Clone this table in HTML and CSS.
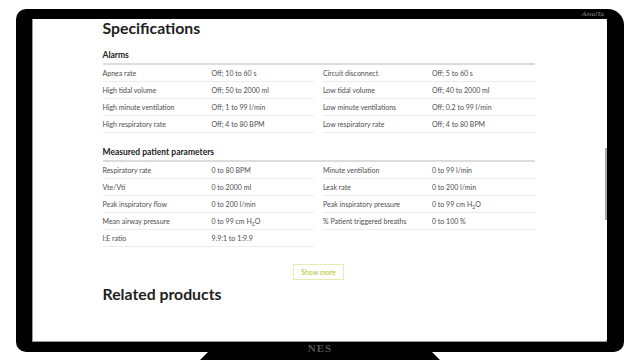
FILE: index.html
```
<!DOCTYPE html>
<html lang="en">
<head>
<meta charset="utf-8">
<title>Specifications</title>
<link rel="stylesheet" href="styles.css">
</head>
<body>
<div class="monitor">
  <div class="bezel-top"><span class="brand">AmalTa</span></div>
  <div class="screen">
    <main class="page">
      <div class="content">
        <h2 class="title">Specifications</h2>

        <section class="spec">
          <h3 class="spec-head">Alarms</h3>
          <div class="spec-grid">
            <div class="spec-col">
              <div class="row"><span>Apnea rate</span><span>Off; 10 to 60 s</span></div>
              <div class="row"><span>High tidal volume</span><span>Off; 50 to 2000 ml</span></div>
              <div class="row"><span>High minute ventilation</span><span>Off; 1 to 99 l/min</span></div>
              <div class="row"><span>High respiratory rate</span><span>Off; 4 to 80 BPM</span></div>
            </div>
            <div class="spec-col">
              <div class="row"><span>Circuit disconnect</span><span>Off; 5 to 60 s</span></div>
              <div class="row"><span>Low tidal volume</span><span>Off; 40 to 2000 ml</span></div>
              <div class="row"><span>Low minute ventilations</span><span>Off; 0.2 to 99 l/min</span></div>
              <div class="row"><span>Low respiratory rate</span><span>Off; 4 to 80 BPM</span></div>
            </div>
          </div>
        </section>

        <section class="spec spec-second">
          <h3 class="spec-head">Measured patient parameters</h3>
          <div class="spec-grid">
            <div class="spec-col">
              <div class="row"><span>Respiratory rate</span><span>0 to 80 BPM</span></div>
              <div class="row"><span>Vte/Vti</span><span>0 to 2000 ml</span></div>
              <div class="row"><span>Peak inspiratory flow</span><span>0 to 200 l/min</span></div>
              <div class="row"><span>Mean airway pressure</span><span>0 to 99 cm H<sub>2</sub>O</span></div>
              <div class="row"><span>I:E ratio</span><span>9.9:1 to 1:9.9</span></div>
            </div>
            <div class="spec-col">
              <div class="row"><span>Minute ventilation</span><span>0 to 99 l/min</span></div>
              <div class="row"><span>Leak rate</span><span>0 to 200 l/min</span></div>
              <div class="row"><span>Peak inspiratory pressure</span><span>0 to 99 cm H<sub>2</sub>O</span></div>
              <div class="row"><span>% Patient triggered breaths</span><span>0 to 100 %</span></div>
            </div>
          </div>
        </section>

        <div class="more-wrap"><button class="more">Show more</button></div>

        <h2 class="title related">Related products</h2>
      </div>
    </main>
    <div class="scroll-track">
      <span class="scroll-dot"></span>
      <span class="scroll-thumb"></span>
      <span class="scroll-dot bottom"></span>
    </div>
  </div>
  <div class="bezel-bottom"><span class="nes">NES</span></div>
</div>
<div class="stand"></div>
</body>
</html>
```

FILE: styles.css
```
html, body {
  margin: 0;
  padding: 0;
  background: #ffffff;
}

body {
  width: 640px;
  height: 360px;
  overflow: hidden;
  font-family: Lato, "Open Sans", sans-serif;
}

.monitor {
  margin: 9px 0 0 16px;
  width: 608px;
  height: 343px;
  background: #000;
  border-radius: 10px 16px 10px 10px;
  display: grid;
  grid-template-rows: 10px 1fr 10px;
  grid-template-columns: 16px 1fr 17px;
}

.bezel-top {
  grid-column: 1 / 4;
  display: flex;
  justify-content: flex-end;
  align-items: center;
  padding-right: 20px;
}

.brand {
  font-family: "Liberation Serif", serif;
  font-style: italic;
  font-size: 7px;
  line-height: 10px;
  color: #8a8a8a;
  letter-spacing: 0.1px;
}

.screen {
  grid-column: 2;
  grid-row: 2;
  background: #fff;
  display: flex;
  overflow: hidden;
  box-shadow: inset 1px 0 0 #9a9a9a, inset 0 -1px 0 #9a9a9a;
}

.page {
  flex: 1;
  overflow: hidden;
}

.content {
  width: 432px;
  margin: 0 auto;
}

.title {
  margin: 0;
  font-size: 15.8px;
  line-height: 18px;
  font-weight: 700;
  color: #1e1e1e;
}

.spec {
  margin-top: 12px;
}

.spec-second {
  margin-top: 13px;
}

.spec-head {
  margin: 0;
  font-size: 8.5px;
  line-height: 12px;
  font-weight: 700;
  color: #222;
  padding-bottom: 2px;
  border-bottom: 2px solid #dcdcdc;
}

.spec-grid {
  display: grid;
  grid-template-columns: 1fr 1fr;
  column-gap: 9px;
}

.row {
  display: grid;
  grid-template-columns: 109px 1fr;
  height: 16px;
  line-height: 16px;
  border-bottom: 1px solid #ececec;
  font-size: 7px;
  color: #4d4d4d;
}

.row sub {
  font-size: 5px;
  line-height: 0;
}

.more-wrap {
  display: flex;
  justify-content: center;
  margin-top: 17px;
}

.more {
  width: 51px;
  height: 16px;
  padding: 0;
  background: #fff;
  border: 1px solid #e6eab4;
  color: #b6bf24;
  font-family: Lato, "Open Sans", sans-serif;
  font-size: 7px;
  line-height: 14px;
}

.related {
  margin-top: 5px;
}

.scroll-track {
  width: 2px;
  display: flex;
  flex-direction: column;
  align-items: center;
}

.scroll-dot {
  width: 1px;
  height: 1px;
  margin-top: 1px;
  background: #999;
}

.scroll-dot.bottom {
  margin-top: auto;
  margin-bottom: 1px;
}

.scroll-thumb {
  width: 2px;
  height: 72px;
  margin-top: 127px;
  background: #a9a9a9;
}

.bezel-bottom {
  grid-column: 1 / 4;
  display: flex;
  justify-content: center;
}

.nes {
  font-family: "Liberation Serif", serif;
  font-weight: 700;
  font-size: 11px;
  line-height: 12px;
  letter-spacing: 1px;
  color: #555;
}

.stand {
  width: 240px;
  height: 8px;
  margin-left: 200px;
  background: #000;
  clip-path: polygon(8px 0, 232px 0, 100% 100%, 0 100%);
}
```
